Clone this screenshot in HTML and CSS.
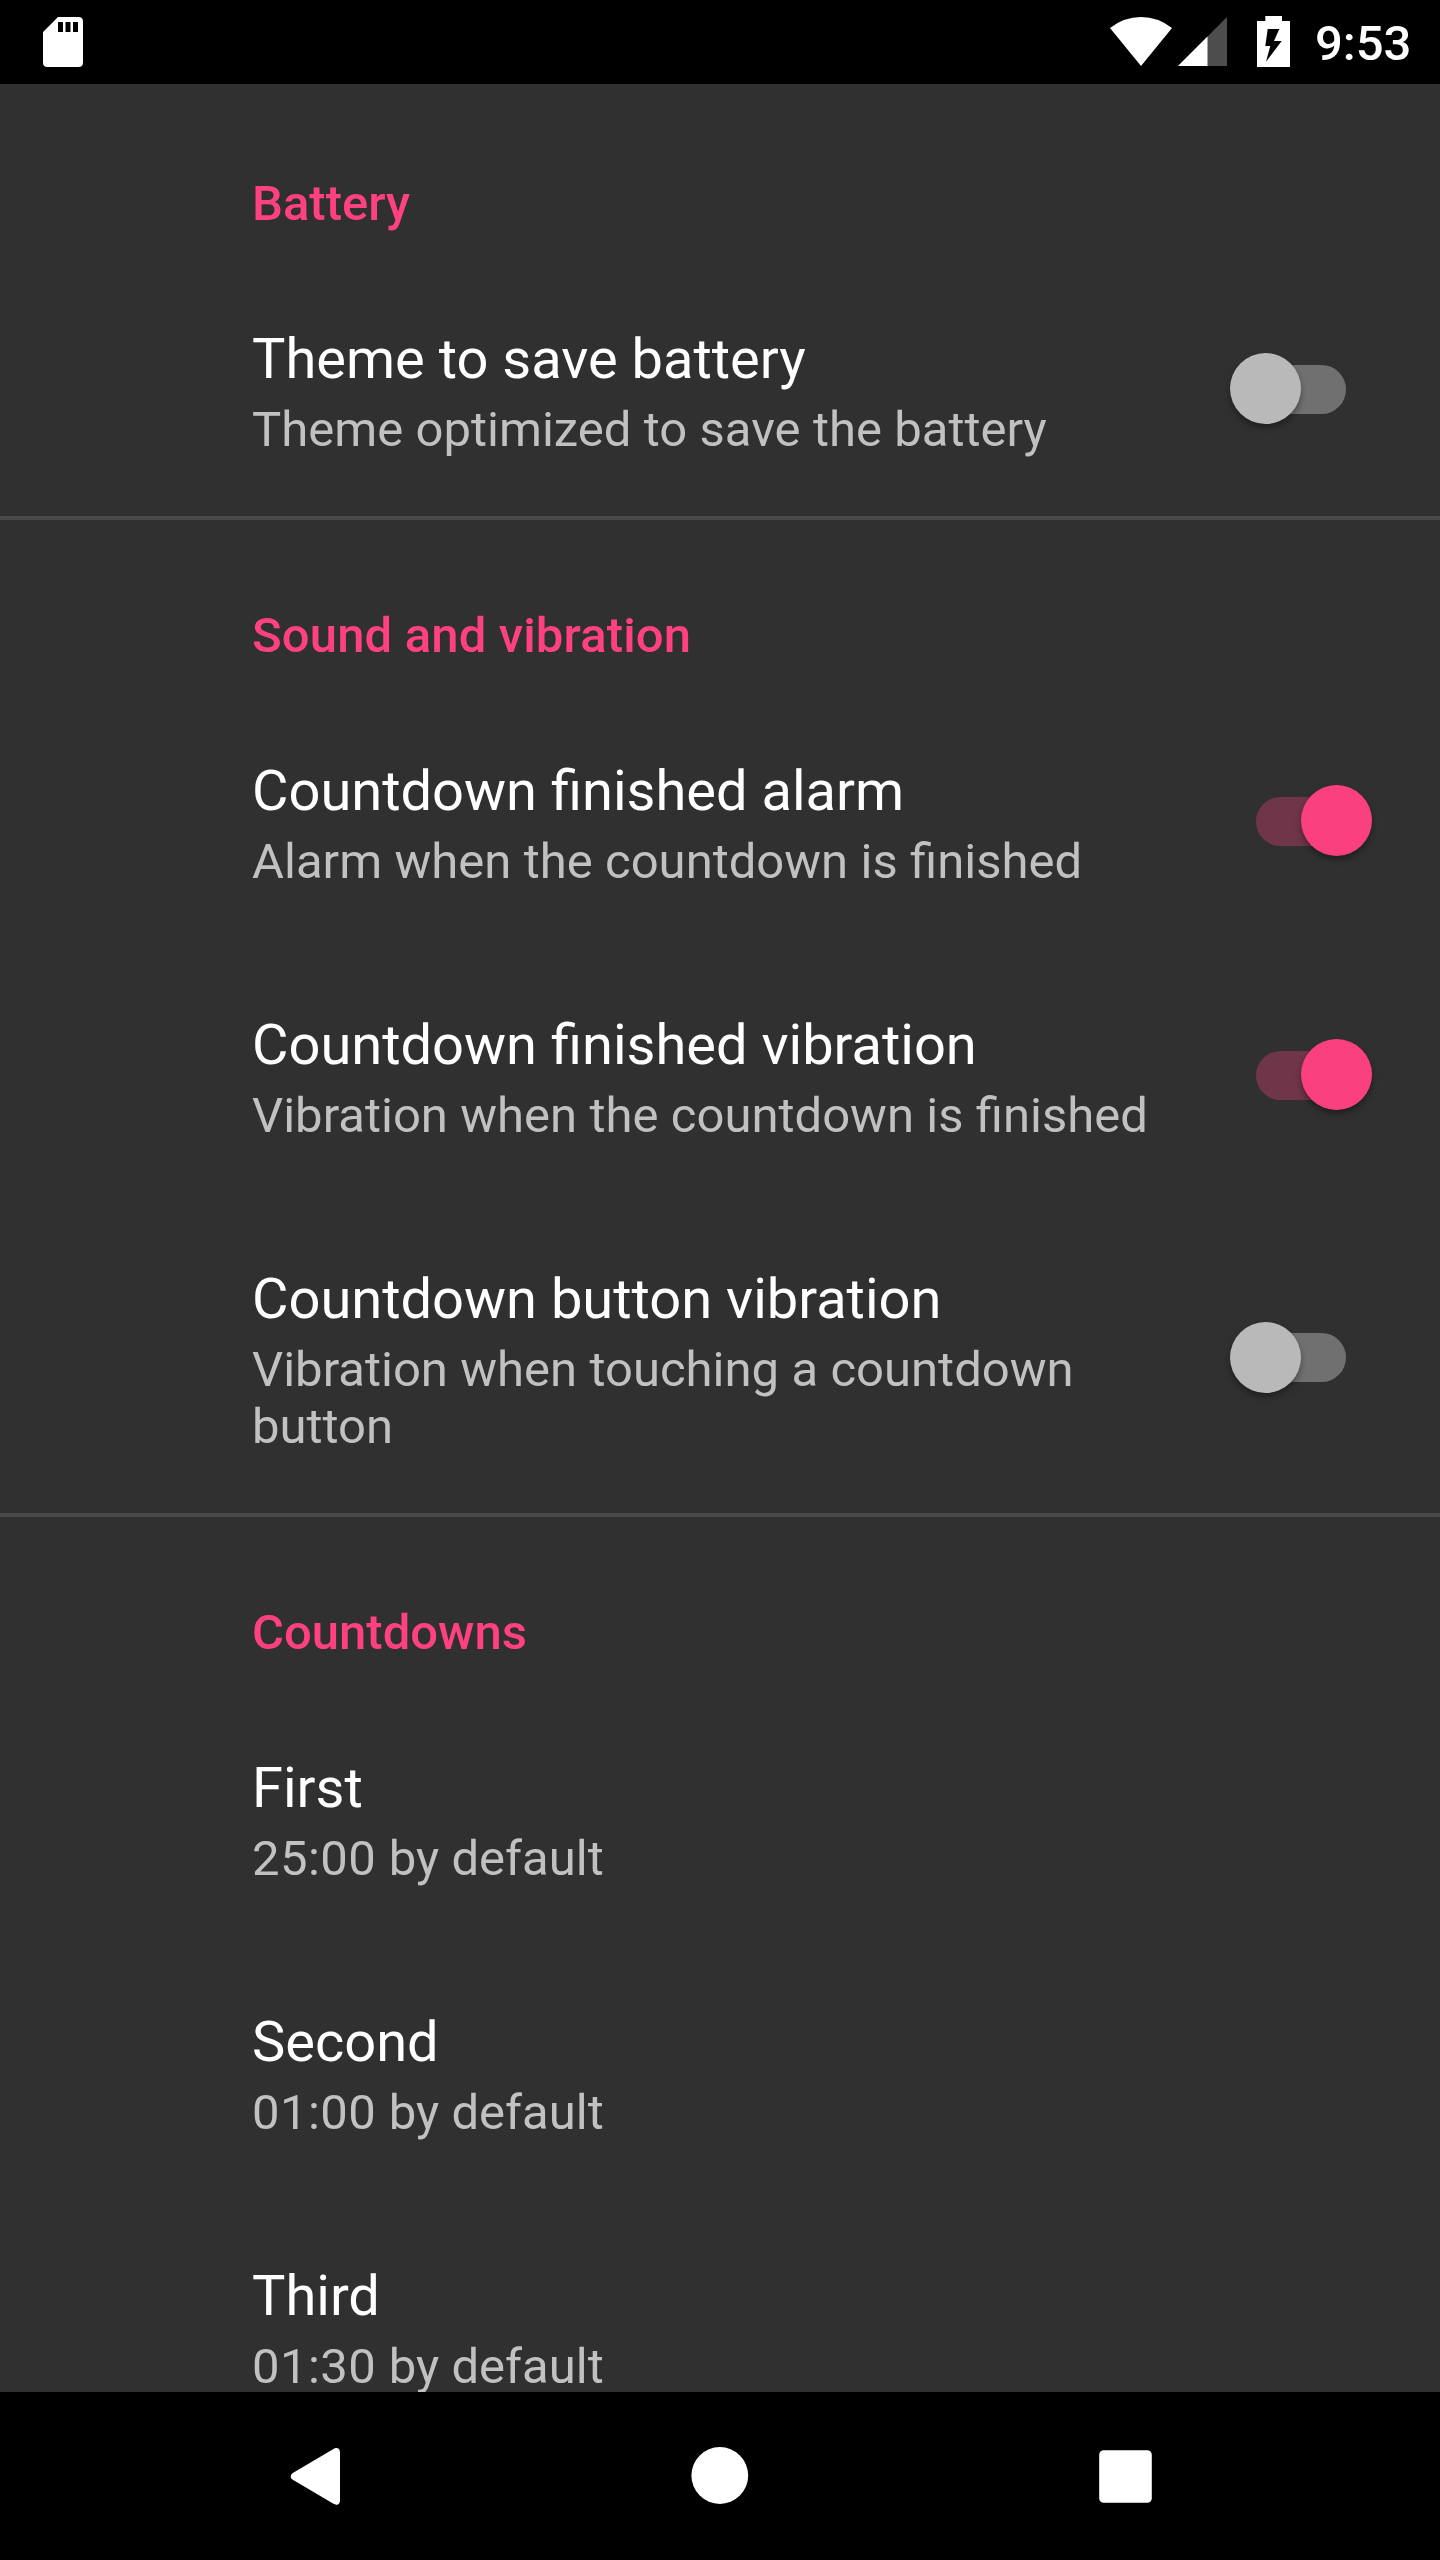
FILE: index.html
```html
<!DOCTYPE html>
<html lang="en">
<head>
<meta charset="utf-8">
<title>Settings</title>
<link rel="stylesheet" href="styles.css">
</head>
<body>
<div class="screen">
  <header class="status-bar">
    <svg class="icon-sd" width="40" height="50" viewBox="0 0 40 50"><path fill="#fff" fill-rule="evenodd" d="M15 0H35.5Q40 0 40 4.500V45.500Q40 50 35.500 50H4.500Q0 50 0 45.500V15ZM15 5V15H20V5ZM22.500 5V15H27.500V5ZM30 5V15H35V5Z"/></svg>
    <div class="status-icons">
      <svg class="icon-wifi" width="62" height="49" viewBox="0 0 62 49"><path fill="#fff" d="M31 49L0 11Q14 0 31 0T62 11Z"/></svg>
      <svg class="icon-signal" width="49" height="49" viewBox="0 0 49 49"><path fill="#4d4d4d" d="M49 0V49H0Z"/><path fill="#fff" d="M29.500 19.500V49H0Z"/></svg>
      <svg class="icon-battery" width="33" height="51" viewBox="0 0 33 51"><path fill="#fff" fill-rule="evenodd" d="M8.300 0H25V5H33V51H0V5H8.300ZM10.700 13L8.300 30H13.300L9 45.700L24.700 25H17L22.300 13Z"/></svg>
      <span class="clock">9:53</span>
    </div>
  </header>

  <main class="settings">
    <section class="group">
      <h2 class="group-title">Battery</h2>
      <div class="row">
        <div class="text"><div class="title">Theme to save battery</div><div class="summary">Theme optimized to save the battery</div></div>
        <div class="switch"><span class="track"></span><span class="thumb"></span></div>
      </div>
    </section>
    <section class="group">
      <h2 class="group-title spaced">Sound and vibration</h2>
      <div class="row">
        <div class="text"><div class="title">Countdown finished alarm</div><div class="summary">Alarm when the countdown is finished</div></div>
        <div class="switch on"><span class="track"></span><span class="thumb"></span></div>
      </div>
      <div class="row">
        <div class="text"><div class="title">Countdown finished vibration</div><div class="summary">Vibration when the countdown is finished</div></div>
        <div class="switch on"><span class="track"></span><span class="thumb"></span></div>
      </div>
      <div class="row">
        <div class="text"><div class="title">Countdown button vibration</div><div class="summary">Vibration when touching a countdown button</div></div>
        <div class="switch"><span class="track"></span><span class="thumb"></span></div>
      </div>
    </section>
    <section class="group">
      <h2 class="group-title">Countdowns</h2>
      <div class="row"><div class="text"><div class="title">First</div><div class="summary"><span class="time">25:00</span> by default</div></div></div>
      <div class="row"><div class="text"><div class="title">Second</div><div class="summary"><span class="time">01:00</span> by default</div></div></div>
      <div class="row"><div class="text"><div class="title">Third</div><div class="summary"><span class="time">01:30</span> by default</div></div></div>
    </section>
  </main>

  <nav class="nav-bar">
    <svg width="80" height="80" viewBox="0 0 80 80"><path fill="#fff" d="M17.800 37L58 13.200Q60.500 11.500 63 12.300Q65 13.300 65 16.500V64.500Q65 67.700 63 68.500Q60.500 69.300 58 67.600L17.800 43.800Q15.700 42.500 15.700 40.400T17.800 37Z"/></svg>
    <svg width="80" height="80" viewBox="0 0 80 80"><circle cx="39.800" cy="39.500" r="28.400" fill="#fff"/></svg>
    <svg width="80" height="80" viewBox="0 0 80 80"><rect x="14.200" y="14.200" width="52.600" height="52.600" rx="4.500" fill="#fff"/></svg>
  </nav>
</div>
</body>
</html>
```

FILE: styles.css
```css
* {
  box-sizing: border-box;
}

body {
  margin: 0;
  background: #303030;
  font-family: Roboto, sans-serif;
}

.screen {
  display: flex;
  flex-direction: column;
  width: 1440px;
  height: 2560px;
  overflow: hidden;
}

svg {
  display: block;
  flex: none;
}

/* Status bar */
.status-bar {
  display: flex;
  flex: none;
  justify-content: space-between;
  height: 84px;
  padding: 16px 29px 0 43px;
  background: #000;
}

.icon-sd,
.icon-wifi,
.icon-signal {
  margin-top: 1px;
}

.status-icons {
  display: flex;
}

.icon-signal {
  margin-left: 6px;
}

.icon-battery {
  margin-left: 30px;
}

.clock {
  width: 96px;
  margin: -1px 0 0 25px;
  color: #fff;
  font-size: 49px;
  font-weight: 500;
  line-height: 58px;
}

/* Preference list */
.settings {
  flex: 1;
  min-height: 0;
  overflow: hidden;
}

.group-title {
  height: 178px;
  margin: 0;
  padding: 91px 56px 0 252px;
  color: #ff4081;
  font-size: 49px;
  font-weight: 500;
  line-height: 58px;
}

.group + .group .group-title {
  padding-top: 87px;
  border-top: 4px solid #494949;
}

.spaced {
  letter-spacing: 0.15px;
}

.row {
  display: flex;
  align-items: center;
  min-height: 254px;
  padding: 64px 68px 58px 252px;
}

.text {
  flex: 1;
  padding-right: 56px;
}

.title {
  color: #fff;
  font-size: 56px;
  line-height: 66px;
}

.summary {
  margin-top: 9px;
  color: #c1c1c1;
  font-size: 49px;
  line-height: 57px;
  word-spacing: 0.2px;
}

.time {
  letter-spacing: 0.45px;
}

/* Switches: the thumb lies over the track */
.switch {
  position: relative;
  display: flex;
  flex: none;
  align-items: center;
  justify-content: center;
  width: 142px;
  height: 71px;
  margin-top: -7px;
}

.track {
  width: 90px;
  height: 49px;
  margin-top: 1px;
  border-radius: 25px;
  background: #707070;
}

.thumb {
  position: absolute;
  top: 0;
  left: 0;
  width: 71px;
  height: 71px;
  border-radius: 50%;
  background: #b9b9b9;
  box-shadow: 0 4px 6px rgba(0, 0, 0, 0.35);
}

.on .track {
  background: #6e3648;
}

.on .thumb {
  left: 71px;
  background: #fb407f;
}

/* Navigation bar */
.nav-bar {
  display: flex;
  flex: none;
  align-items: center;
  justify-content: center;
  gap: 325px;
  height: 168px;
  background: #000;
}
```
